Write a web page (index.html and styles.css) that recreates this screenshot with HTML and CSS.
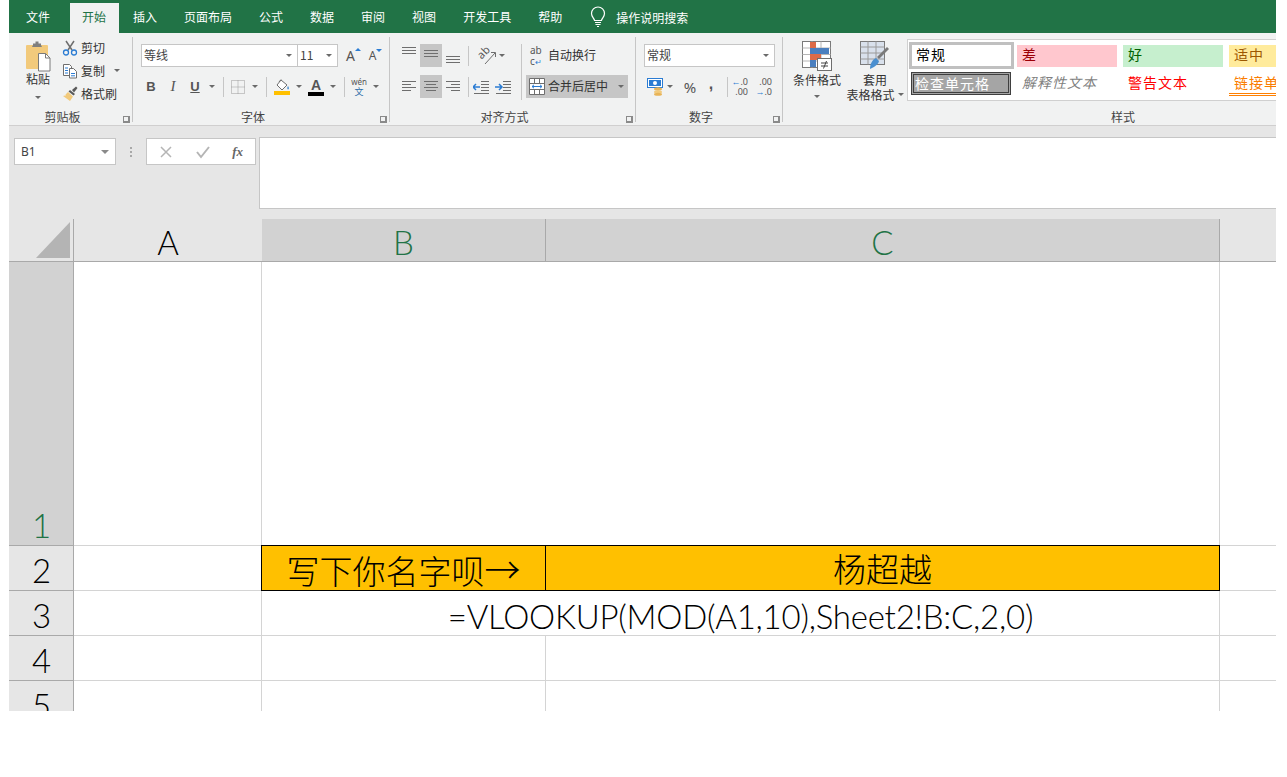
FILE: index.html
```html
<!DOCTYPE html>
<html lang="zh">
<head>
<meta charset="utf-8">
<title>Excel</title>
<link rel="stylesheet" href="styles.css">
</head>
<body>
<div class="app">
  <nav class="tabs">
    <span class="tab">文件</span>
    <span class="tab active">开始</span>
    <span class="tab">插入</span>
    <span class="tab">页面布局</span>
    <span class="tab">公式</span>
    <span class="tab">数据</span>
    <span class="tab">审阅</span>
    <span class="tab">视图</span>
    <span class="tab">开发工具</span>
    <span class="tab">帮助</span>
    <span class="tell">
      <svg width="18" height="22" viewBox="0 0 18 22" fill="none" stroke="#fff" stroke-width="1.2"><path d="M5.6 14.5C5 12 2.5 10.8 2.5 7.5a6.500 6.500 0 0 1 13 0c0 3.300-2.500 4.500-3.100 7z"/><path d="M6 16.500h6M6.500 18.500h5M8 20.500h2"/></svg>
      <span>操作说明搜索</span>
    </span>
  </nav>

  <section class="ribbon">
    <div class="group g-clip">
      <div class="body clip-body">
        <div class="paste">
          <svg width="26" height="31" viewBox="0 0 26 31"><rect x="1" y="4" width="22" height="24" rx="1" fill="#f2ca7c"/><path d="M8 4V2.500h2.500V0.500h3V2.500H16V4l1 2H7z" fill="#7f7f7f"/><path d="M13.500 12.500h7l4.500 4.500v13h-11.500z" fill="#fff" stroke="#7a7a7a"/><path d="M20.500 12.500V17H25" fill="none" stroke="#7a7a7a"/></svg>
          <span class="paste-label">粘贴</span>
          <i class="caret"></i>
        </div>
        <div class="clip-list">
          <div class="clip-item">
            <svg width="16" height="16" viewBox="0 0 16 16" fill="none"><path d="M4 1l6 9M12 1L6 10" stroke="#6e6e6e" stroke-width="1.500"/><circle cx="4" cy="12.500" r="2.500" stroke="#2b7cd3" stroke-width="1.300"/><circle cx="12" cy="12.500" r="2.500" stroke="#2b7cd3" stroke-width="1.300"/></svg>
            <span>剪切</span>
          </div>
          <div class="clip-item">
            <svg width="16" height="16" viewBox="0 0 16 16" fill="#fff" stroke="#6e6e6e"><path d="M1.500 1.500h6l2 2v9h-8z"/><path d="M7.500 5.500h4l3 3v6.500h-7z"/><path d="M3 5h3M3 7.500h3M3 10h3M9 10.500h4M9 12.800h4" stroke="#2b7cd3" fill="none"/></svg>
            <span>复制</span>
            <i class="caret copy-caret"></i>
          </div>
          <div class="clip-item">
            <svg width="16" height="16" viewBox="0 0 16 16"><path d="M10 4l4-3.500 1.500 1.500-3.500 4.500z" fill="#5a5a5a"/><path d="M8 4l5 4-1.500 1.500-5-4z" fill="#5a5a5a"/><path d="M6 6l5 4.500-3 4.500L1 10l2-.500 1 0-.500-1z" fill="#f2ca7c"/></svg>
            <span>格式刷</span>
          </div>
        </div>
      </div>
      <div class="label"><span></span><span>剪贴板</span><i class="launch"></i></div>
    </div>

    <div class="group g-font">
      <div class="body col">
        <div class="row r-top">
          <div class="select font-name"><span>等线</span><i class="caret"></i></div>
          <div class="select font-size"><span class="size-num">11</span><i class="caret"></i></div>
          <span class="grow-a big">A<i class="up"></i></span>
          <span class="grow-a small">A<i class="down"></i></span>
        </div>
        <div class="row r-fmt">
          <span class="fmt w20"><b>B</b></span>
          <span class="fmt w24 ital">I</span>
          <span class="fmt w20 under">U</span>
          <span class="slot w14"><i class="caret"></i></span>
          <span class="slot w8"><i class="sep"></i></span>
          <span class="slot w22">
            <svg width="14" height="14" viewBox="0 0 14 14" fill="none" stroke="#9a9a9a" stroke-dasharray="1 1"><path d="M.5.500h13v13H.500zM7 .500v13M.500 7h13"/></svg>
          </span>
          <span class="slot w12"><i class="caret"></i></span>
          <span class="slot w10"><i class="sep"></i></span>
          <span class="slot w22 stack">
            <svg width="16" height="12" viewBox="0 0 16 12"><path d="M7 1l6 5-5 5-5-5z" fill="#fff" stroke="#6e6e6e"/><path d="M5 3L7 .500" stroke="#6e6e6e"/><path d="M14 7c1 1.500 1.500 3 0 3.500-1-.500-1-2 0-3.500z" fill="#4a8fd0"/></svg>
            <i class="bar amber"></i>
          </span>
          <span class="slot w12"><i class="caret"></i></span>
          <span class="slot w22 stack letter">A<i class="bar black"></i></span>
          <span class="slot w12"><i class="caret"></i></span>
          <span class="slot w10"><i class="sep"></i></span>
          <span class="slot w20 wen"><small>wén</small><em>文</em></span>
          <span class="slot w14"><i class="caret"></i></span>
        </div>
      </div>
      <div class="label"><span></span><span>字体</span><i class="launch"></i></div>
    </div>

    <div class="group g-align">
      <div class="body align-body">
        <div class="col align-left">
          <div class="row r-align">
            <span class="aln"><svg width="14" height="23" viewBox="0 0 14 23" stroke="#6e6e6e"><path d="M0 3.500h14M0 6.500h14M0 9.500h14"/></svg></span>
            <span class="aln on"><svg width="14" height="23" viewBox="0 0 14 23" stroke="#6e6e6e"><path d="M0 6.500h14M0 9.500h14M0 12.500h14"/></svg></span>
            <span class="aln"><svg width="14" height="23" viewBox="0 0 14 23" stroke="#6e6e6e"><path d="M0 12.500h14M0 15.500h14M0 18.500h14"/></svg></span>
            <span class="slot w8"><i class="sep tall"></i></span>
            <span class="slot orient">
              <span class="orient-mark">
                <span class="rot">ab</span>
                <svg width="18" height="18" viewBox="0 0 18 18" fill="none" stroke="#6e6e6e"><path d="M7 17L17 6M13 5.500h4.500V10"/></svg>
              </span>
              <i class="caret"></i>
            </span>
          </div>
          <div class="row r-align">
            <span class="aln"><svg width="14" height="23" viewBox="0 0 14 23" stroke="#6e6e6e"><path d="M0 6.500h14M0 9.500h9M0 12.500h14M0 15.500h9"/></svg></span>
            <span class="aln on"><svg width="14" height="23" viewBox="0 0 14 23" stroke="#6e6e6e"><path d="M0 6.500h14M2 9.500h10M0 12.500h14M2 15.500h10"/></svg></span>
            <span class="aln"><svg width="14" height="23" viewBox="0 0 14 23" stroke="#6e6e6e"><path d="M0 6.500h14M5 9.500h9M0 12.500h14M5 15.500h9"/></svg></span>
            <span class="slot w8"><i class="sep tall"></i></span>
            <span class="slot indent">
              <svg width="16" height="14" viewBox="0 0 16 14" fill="none"><path d="M8 1.500h8M8 4.500h8M8 7.500h8M8 10.500h8M1 13.500h15" stroke="#6e6e6e"/><path d="M0 7h7M3 4L0 7l3 3" stroke="#2b7cd3" stroke-width="1.500"/></svg>
              <svg width="16" height="14" viewBox="0 0 16 14" fill="none"><path d="M8 1.500h8M8 4.500h8M8 7.500h8M8 10.500h8M1 13.500h15" stroke="#6e6e6e"/><path d="M0 7h7M4 4l3 3-3 3" stroke="#2b7cd3" stroke-width="1.500"/></svg>
            </span>
          </div>
        </div>
        <i class="sep divider"></i>
        <div class="col align-right">
          <div class="wrap-btn">
            <span class="abc"><span>ab</span><span>c<i class="ret">↵</i></span></span>
            <span class="btn-text">自动换行</span>
          </div>
          <div class="merge-btn">
            <svg width="16" height="17" viewBox="0 0 16 17" fill="#fff" stroke="#6e6e6e"><path d="M.500.500h15v16H.500z"/><path d="M.500 5.500h15M.500 11.500h15M5.500.500v5M10.500.500v5M5.500 11.500v5M10.500 11.500v5" fill="none"/><path d="M3 8.500h10M5 6.800L3 8.500l2 1.700M11 6.800l2 1.700-2 1.700" stroke="#2b7cd3" fill="none"/></svg>
            <span class="btn-text">合并后居中</span>
            <i class="caret merge-caret"></i>
          </div>
        </div>
      </div>
      <div class="label"><span></span><span>对齐方式</span><i class="launch"></i></div>
    </div>

    <div class="group g-num">
      <div class="body col num-body">
        <div class="select num-fmt"><span>常规</span><i class="caret"></i></div>
        <div class="row num-row">
          <span class="slot w18">
            <svg width="17" height="18" viewBox="0 0 17 18"><rect x=".5" y=".5" width="15" height="9" fill="#fff" stroke="#2b7cd3"/><rect x="2" y="2" width="12" height="6" fill="#2b7cd3"/><circle cx="8" cy="5" r="2" fill="#fff"/><ellipse cx="11" cy="11" rx="4" ry="1.700" fill="#e8b458"/><ellipse cx="11" cy="14" rx="4" ry="1.700" fill="#f2ca7c"/><ellipse cx="11" cy="16.300" rx="4" ry="1.500" fill="#e8b458"/></svg>
          </span>
          <span class="slot w12"><i class="caret"></i></span>
          <span class="slot w20 pct">%</span>
          <span class="slot w22 comma">,</span>
          <span class="slot w10"><i class="sep"></i></span>
          <span class="dec"><span><i class="arr">←</i>.0</span><span>.00</span></span>
          <span class="dec"><span>.00</span><span><i class="arr">→</i>.0</span></span>
        </div>
      </div>
      <div class="label"><span></span><span>数字</span><i class="launch"></i></div>
    </div>

    <div class="group g-style">
      <div class="body style-body">
        <div class="big-btn cond">
          <svg width="30" height="30" viewBox="0 0 30 30"><rect x=".5" y=".5" width="28" height="26" fill="#fff" stroke="#7a7a7a"/><path d="M10 .5v26M19 .5v26M.5 7h28M.5 13.500h28M.5 20h28" stroke="#b5b5b5"/><rect x="8" y="1" width="6" height="6" fill="#dd6b48"/><rect x="8" y="7" width="19" height="6" fill="#4a7fbf"/><rect x="8" y="13" width="11" height="6" fill="#dd6b48"/><rect x="8" y="19" width="6" height="7" fill="#4a7fbf"/><rect x="15.500" y="17.500" width="14" height="12" fill="#fff" stroke="#6e6e6e"/><path d="M19 22h7M19 25h7M24.500 20l-3 7.500" stroke="#444" fill="none"/></svg>
          <span>条件格式</span>
          <i class="caret"></i>
        </div>
        <div class="big-btn table">
          <svg width="30" height="30" viewBox="0 0 30 30"><rect x=".5" y=".5" width="24" height="23" fill="#d9e1ec" stroke="#7a7a7a"/><path d="M8 .5v23M16 .5v23M.5 6h24M.5 12h24M.5 18h24" stroke="#9a9a9a"/><path d="M29 8L19 18l-2-2L27 6z" fill="#7a7a7a"/><path d="M16 17l3 3c-1 4-5 6-9 8 0-5 2-9 6-11z" fill="#4a8fd0"/></svg>
          <span>套用</span>
          <span class="tb-line">表格格式<i class="caret"></i></span>
        </div>
        <div class="gallery">
          <span class="st normal">常规</span>
          <span class="st bad">差</span>
          <span class="st good">好</span>
          <span class="st neutral">适中</span>
          <span class="st check"><span>检查单元格</span></span>
          <span class="st explain">解释性文本</span>
          <span class="st warn">警告文本</span>
          <span class="st link">链接单元格</span>
        </div>
      </div>
      <div class="label style-label">样式</div>
    </div>
  </section>

  <section class="fbar">
    <div class="fbar-tools">
      <div class="namebox"><span>B1</span><i class="caret"></i></div>
      <div class="dots"><i></i><i></i><i></i></div>
      <div class="fx-box">
        <svg width="14" height="14" viewBox="0 0 14 14" stroke="#b5b5b5" stroke-width="1.500"><path d="M2 2l10 10M12 2L2 12"/></svg>
        <svg width="16" height="14" viewBox="0 0 16 14" fill="none" stroke="#b5b5b5" stroke-width="2"><path d="M2 7l4 5 8-10"/></svg>
        <span class="fx">fx</span>
      </div>
    </div>
    <div class="finput"></div>
  </section>

  <section class="sheet">
    <div class="corner"><i></i></div>
    <div class="ch">A</div>
    <div class="ch sel">B</div>
    <div class="ch sel">C</div>
    <div class="ch blank"></div>

    <div class="rh sel">1</div>
    <div class="c"></div>
    <div class="c merged"></div>
    <div class="c bare"></div>

    <div class="rh">2</div>
    <div class="c"></div>
    <div class="amber-cell"><span>写下你名字呗<span class="arrow">→</span></span></div>
    <div class="amber-cell">杨超越</div>
    <div class="c bare"></div>

    <div class="rh">3</div>
    <div class="c"></div>
    <div class="c merged formula">=VLOOKUP(MOD(A1,10),Sheet2!B:C,2,0)</div>
    <div class="c bare"></div>

    <div class="rh">4</div>
    <div class="c"></div><div class="c"></div><div class="c"></div><div class="c bare"></div>

    <div class="rh">5</div>
    <div class="c"></div><div class="c"></div><div class="c"></div><div class="c bare"></div>
  </section>
</div>
</body>
</html>
```

FILE: styles.css
```css
* { box-sizing: border-box; }
html, body { margin: 0; background: #fff; }
body {
  font-family: "Noto Sans CJK SC", "Noto Sans", sans-serif;
  font-size: 12px;
  color: #444;
}
i { font-style: normal; }
.app {
  width: 1267px;
  height: 711px;
  margin-left: 9px;
  overflow: hidden;
}

/* tabs */
.tabs {
  height: 33px;
  background: #217346;
  display: flex;
  align-items: flex-end;
  gap: 1px;
  padding-left: 4px;
  color: #fff;
}
.tab {
  height: 30px;
  padding: 0 13px;
  line-height: 28px;
  white-space: nowrap;
}
.tab.active {
  background: #f1f2f2;
  color: #217346;
  padding: 0 13px 0 12px;
  margin-left: 6px;
}
.tell {
  display: flex;
  align-items: center;
  height: 30px;
  margin-left: 13px;
  gap: 9px;
  padding-bottom: 2px;
  font-size: 12px;
}

/* ribbon */
.ribbon {
  height: 93px;
  background: #f1f2f2;
  border-bottom: 1px solid #d0cfcf;
  display: flex;
  padding-top: 4px;
}
.group {
  height: 85px;
  display: flex;
  flex-direction: column;
  border-right: 1px solid #c6c6c6;
  flex: none;
}
.g-clip { width: 124px; }
.g-font { width: 257px; }
.g-align { width: 246px; }
.g-num { width: 147px; }
.g-style { flex: 1; border-right: 0; min-width: 0; }
.body { flex: none; height: 70px; }
.label {
  height: 20px;
  flex: none;
  display: grid;
  grid-template-columns: 1fr auto 1fr;
  align-items: center;
  text-align: center;
  line-height: 20px;
  color: #444;
  padding-right: 16px;
}
.launch {
  justify-self: end;
  width: 7px;
  height: 7px;
  margin: 4px -14px 0 0;
  border-left: 1px solid #8a8a8a;
  border-top: 1px solid #8a8a8a;
  border-right: 2px solid #8a8a8a;
  border-bottom: 2px solid #8a8a8a;
  background: #f1f2f2;
}
.caret {
  display: inline-block;
  width: 0;
  height: 0;
  border-left: 3px solid transparent;
  border-right: 3px solid transparent;
  border-top: 3px solid #6a6a6a;
  flex: none;
}
.row { display: flex; align-items: center; }
.col { display: flex; flex-direction: column; }
.slot { display: flex; align-items: center; justify-content: center; flex: none; }
.w8 { width: 8px; }
.w10 { width: 10px; }
.w12 { width: 12px; }
.w14 { width: 14px; }
.w18 { width: 18px; }
.w20 { width: 20px; }
.w22 { width: 22px; }
.w24 { width: 24px; }
.sep { display: block; width: 1px; height: 20px; background: #c6c6c6; }
.sep.tall { height: 20px; }

/* clipboard */
.clip-body { display: flex; padding: 0 0 0 11px; }
.paste {
  width: 36px;
  display: flex;
  flex-direction: column;
  align-items: center;
  padding-top: 4px;
}
.paste-label { line-height: 14px; color: #333; }
.paste .caret { margin-top: 10px; }
.clip-list {
  margin: -1px 0 0 6px;
  display: flex;
  flex-direction: column;
}
.clip-item {
  height: 23px;
  flex: none;
  display: flex;
  align-items: center;
  gap: 3px;
  color: #333;
  white-space: nowrap;
}
.copy-caret { margin-left: 6px; }

/* font */
.r-top { padding: 7px 0 0 8px; }
.select {
  height: 23px;
  background: #fff;
  border: 1px solid #c6c6c6;
  display: flex;
  align-items: center;
  justify-content: space-between;
  padding: 0 5px 2px 2px;
  color: #444;
  flex: none;
}
.select .caret { margin-top: 2px; }
.font-name { width: 157px; }
.font-size { width: 41px; margin-left: -1px; }
.size-num { color: #444; font-size: 12px; }
.grow-a {
  display: flex;
  justify-content: center;
  align-items: flex-end;
  font-family: "Noto Sans", sans-serif;
  color: #555;
  flex: none;
}
.grow-a.big { width: 16px; margin-left: 5px; font-size: 14px; }
.grow-a.small { width: 16px; margin-left: 6px; font-size: 12px; }
.grow-a i {
  width: 0;
  height: 0;
  border-left: 3px solid transparent;
  border-right: 3px solid transparent;
  align-self: flex-start;
  margin: 2px -5px 0 0;
}
.grow-a .up { border-bottom: 3px solid #2b7cd3; }
.grow-a .down { border-top: 3px solid #2b7cd3; }
.r-fmt { padding: 9px 0 0 8px; height: 30px; }
.fmt { display: flex; justify-content: center; flex: none; font-family: "Liberation Sans", sans-serif; font-size: 13px; color: #555; }
.ital { font-family: "Liberation Serif", serif; font-style: italic; font-size: 15px; }
.under { text-decoration: underline; font-weight: 700; }
.stack { flex-direction: column; }
.bar { display: block; width: 16px; height: 4px; }
.amber { background: #ffc000; }
.black { background: #000; }
.letter { font-family: "Liberation Sans", sans-serif; font-size: 14px; font-weight: 700; line-height: 14px; color: #555; }
.wen { flex-direction: column; line-height: 10px; color: #2b6ca8; }
.wen small { font-size: 8px; font-family: "Noto Sans", sans-serif; color: #555; }
.wen em { font-style: normal; font-size: 9px; }

/* align */
.align-body { display: flex; padding: 7px 0 0 8px; }
.align-left { width: 123px; gap: 8px; }
.r-align { height: 23px; }
.aln { width: 22px; height: 23px; display: flex; justify-content: center; flex: none; }
.aln.on { background: #c6c6c6; }
.orient { width: 36px; gap: 3px; margin-left: 1px; }
.orient-mark { display: grid; width: 18px; height: 18px; }
.orient-mark > * { grid-area: 1 / 1; }
.rot {
  font-family: "Noto Sans", sans-serif;
  font-size: 11px;
  line-height: 12px;
  margin: -1px 4px 5px -2px;
  color: #555;
  text-align: center;
  transform: rotate(-45deg);
}
.indent { gap: 6px; margin-left: 1px; }
.divider { height: 56px; flex: none; }
.align-right { margin-left: 4px; gap: 8px; }
.wrap-btn { height: 23px; display: flex; align-items: center; gap: 4px; padding-left: 4px; color: #333; white-space: nowrap; }
.abc { display: flex; flex-direction: column; width: 14px; height: 22px; font-family: "Noto Sans", sans-serif; font-size: 10px; line-height: 11px; color: #555; }
.ret { color: #2b7cd3; font-size: 8px; }
.btn-text { margin-bottom: 2px; }
.merge-btn { height: 23px; width: 102px; background: #c6c6c6; display: flex; align-items: center; gap: 3px; padding-left: 3px; color: #333; white-space: nowrap; }
.merge-caret { margin-left: 7px; }

/* number */
.num-body { padding: 7px 0 0 8px; }
.num-fmt { width: 131px; }
.num-row { margin-top: 8px; height: 23px; padding-left: 2px; }
.pct { font-family: "Noto Sans", sans-serif; font-size: 15px; color: #555; margin-left: 4px; }
.comma { font-family: "Liberation Sans", sans-serif; font-size: 16px; font-weight: 700; color: #555; padding-bottom: 6px; }
.dec { width: 16px; display: flex; flex-direction: column; align-items: flex-end; font-family: "Noto Sans", sans-serif; font-size: 9px; line-height: 10px; color: #555; margin-right: 8px; flex: none; }
.arr { color: #2b7cd3; }

/* styles */
.style-body { display: flex; }
.big-btn { display: flex; flex-direction: column; align-items: center; color: #333; line-height: 15px; flex: none; }
.big-btn svg { margin-bottom: 1px; }
.cond { width: 58px; margin: 4px 0 0 5px; }
.cond .caret { margin-top: 8px; }
.table { width: 58px; margin-top: 4px; }
.tb-line { white-space: nowrap; display: flex; align-items: center; gap: 3px; }
.gallery {
  width: 372px;
  height: 62px;
  margin: 2px 0 0 3px;
  background: #fff;
  border: 1px solid #d0d0d0;
  border-right: 0;
  display: grid;
  grid-template-columns: 108px 106px 106px 100px;
  grid-template-rows: 31px 25px;
  overflow: hidden;
  font-size: 14px;
  letter-spacing: 1px;
}
.st { display: flex; align-items: center; white-space: nowrap; padding: 0 0 4px 5px; margin: 5px 5px 4px 1px; }
.normal { color: #000; border: 3px solid #c0c0c0; margin: 2px 2px 2px 1px; background: #fff; padding-left: 4px; }
.bad { background: #ffc7ce; color: #9c0006; }
.good { background: #c6efce; color: #006100; }
.neutral { background: #ffeb9c; color: #9c5700; margin-right: 0; }
.check { background: #a5a5a5; color: #fff; border: 1px solid #3f3f3f; padding: 1px; margin: 1px 5px 1px 3px; }
.check span { flex: 1; height: 100%; border: 1px solid #3f3f3f; padding-left: 1px; line-height: 16px; }
.explain { font-style: italic; color: #7f7f7f; margin: 1px 5px 1px 1px; }
.warn { color: #f00; margin: 1px 5px 1px 1px; }
.link { color: #fa7d00; margin: 1px 0 0 1px; border-bottom: 3px double #ff8001; padding-bottom: 2px; }
.style-label { display: block; padding-right: 0; width: 680px; }

/* formula bar */
.fbar { height: 93px; background: #e6e6e6; display: flex; align-items: flex-start; padding-top: 11px; }
.fbar-tools { display: flex; width: 250px; padding: 1px 0 0 5px; align-items: center; }
.namebox {
  width: 102px; height: 27px; background: #fff; border: 1px solid #c6c6c6;
  display: flex; align-items: center; justify-content: space-between;
  padding: 0 6px; font-family: "Noto Sans", sans-serif; color: #444;
}
.namebox .caret { border-left-width: 4px; border-right-width: 4px; border-top-width: 4px; border-top-color: #8a8a8a; }
.dots { width: 30px; display: flex; flex-direction: column; align-items: center; gap: 2px; }
.dots i { width: 2px; height: 2px; background: #a8a8a8; display: block; }
.fx-box {
  width: 110px; height: 27px; background: #fff; border: 1px solid #c6c6c6;
  display: flex; align-items: center; justify-content: space-between;
  padding: 0 12px 0 12px;
}
.fx { font-family: "Liberation Serif", serif; font-style: italic; font-weight: 700; color: #666; font-size: 13px; }
.finput { flex: 1; height: 72px; background: #fff; border: 1px solid #c6c6c6; border-right: 0; }

/* sheet */
.sheet {
  display: grid;
  grid-template-columns: 65px 188px 284px 674px 56px;
  grid-template-rows: 43px 284px 45px 45px 45px 45px;
  background: #fff;
  font-family: "Lato", "Noto Sans CJK SC", sans-serif;
  font-weight: 300;
  font-size: 33px;
  color: #000;
}
.corner, .ch { background: #e6e6e6; border-bottom: 1px solid #a9a9a9; }
.corner { border-right: 1px solid #a9a9a9; padding: 3px 3px 3px 27px; }
.corner i { display: block; width: 100%; height: 100%; background: #b4b4b4; clip-path: polygon(100% 0, 100% 100%, 0 100%); }
.ch { display: flex; align-items: center; justify-content: center; padding-top: 3px; }
.ch.sel { background: #d2d2d2; color: #217346; border-right: 1px solid #a9a9a9; }
.ch.blank { background: #e6e6e6; }
.rh {
  background: #e6e6e6;
  border-right: 1px solid #a9a9a9;
  border-bottom: 1px solid #a9a9a9;
  display: flex; align-items: flex-end; justify-content: center;
  line-height: 39px;
  padding-left: 1px;
}
.rh.sel { background: #d2d2d2; color: #217346; }
.c { border-right: 1px solid #d4d4d4; border-bottom: 1px solid #d4d4d4; }
.merged { grid-column: 3 / 5; }
.c.bare { border-right: 0; }
.formula { display: flex; align-items: center; justify-content: center; white-space: nowrap; padding-top: 5px; letter-spacing: -.23px; }
.amber-cell {
  background: #ffc000;
  border: 1px solid #000;
  margin: -1px 0 0 -1px;
  display: flex; align-items: center; justify-content: center;
  white-space: nowrap;
  font-family: "Noto Sans CJK SC", sans-serif;
  font-weight: 300;
}
.arrow { font-size: 36px; }
```
